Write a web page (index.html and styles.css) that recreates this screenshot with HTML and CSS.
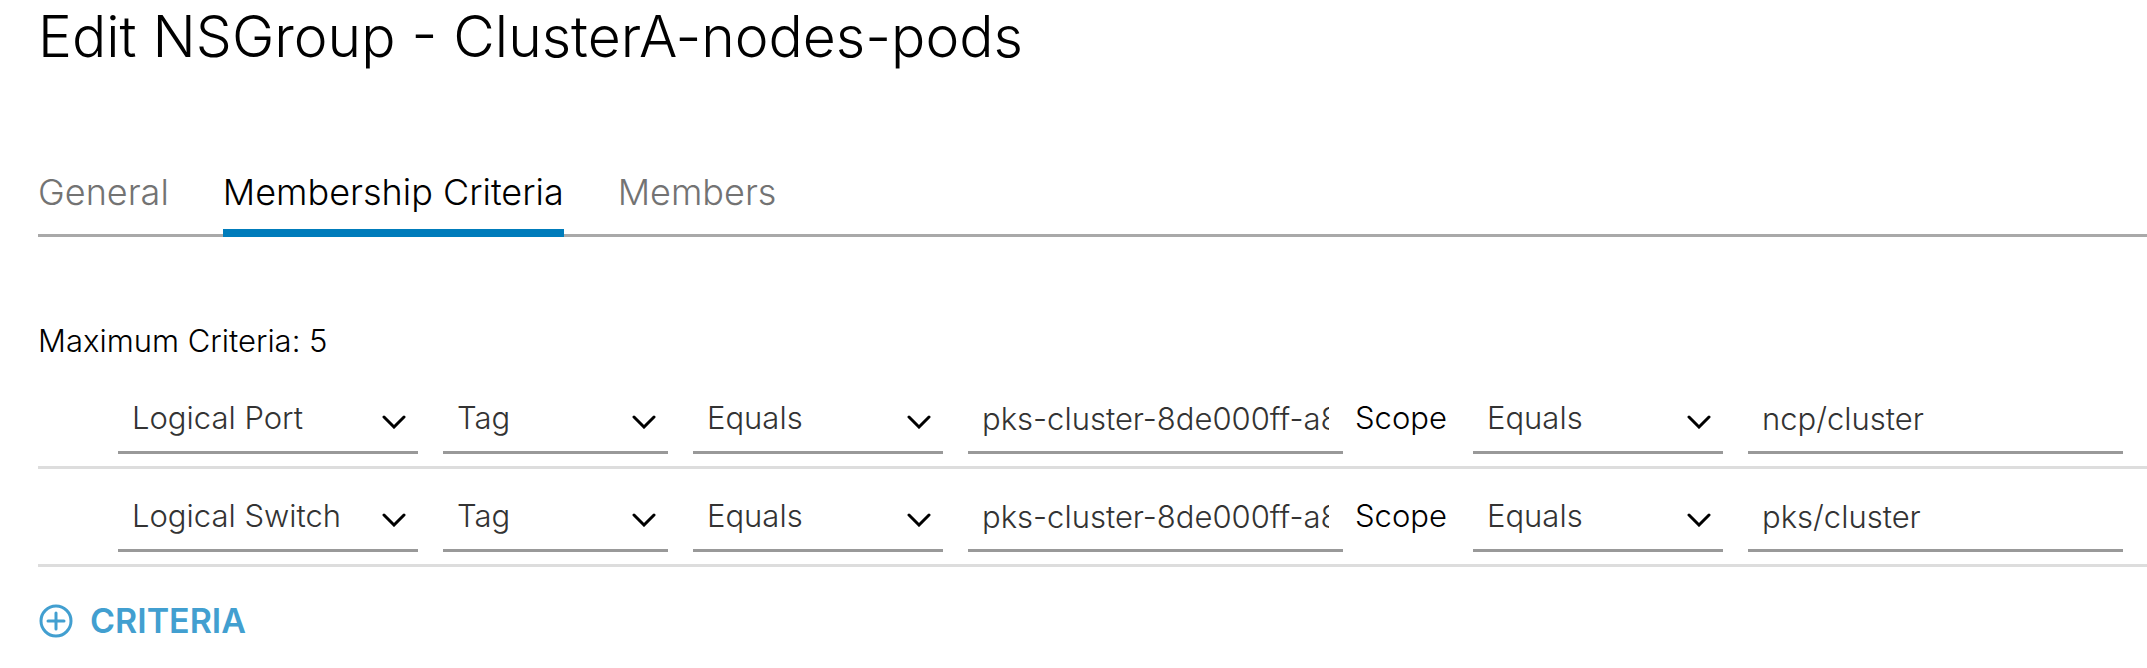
FILE: index.html
```html
<!DOCTYPE html>
<html lang="en">
<head>
<meta charset="utf-8">
<title>Edit NSGroup</title>
<link rel="stylesheet" href="styles.css">
</head>
<body>
<main class="dialog">
  <h1 class="title">Edit NSGroup - ClusterA-nodes-pods</h1>
  <nav class="tabs" role="tablist">
    <button class="tab" type="button" role="tab">General</button>
    <button class="tab active" type="button" role="tab" aria-selected="true">Membership Criteria</button>
    <button class="tab" type="button" role="tab">Members</button>
  </nav>
  <section class="criteria">
    <p class="hint">Maximum Criteria: 5</p>
    <div class="row">
      <div class="field"><select aria-label="Object type"><option>Logical Port</option></select><svg class="chevron" viewBox="0 0 24 14"><path d="M2 2l10 10 10-10"/></svg></div>
      <div class="field"><select aria-label="Attribute"><option>Tag</option></select><svg class="chevron" viewBox="0 0 24 14"><path d="M2 2l10 10 10-10"/></svg></div>
      <div class="field"><select aria-label="Tag operator"><option>Equals</option></select><svg class="chevron" viewBox="0 0 24 14"><path d="M2 2l10 10 10-10"/></svg></div>
      <div class="field wide"><input type="text" aria-label="Tag" value="pks-cluster-8de000ff-a8"></div>
      <label class="scope" for="scope1">Scope</label>
      <div class="field"><select aria-label="Scope operator"><option>Equals</option></select><svg class="chevron" viewBox="0 0 24 14"><path d="M2 2l10 10 10-10"/></svg></div>
      <div class="field wide"><input type="text" id="scope1" value="ncp/cluster"></div>
    </div>
    <div class="row">
      <div class="field"><select aria-label="Object type"><option>Logical Switch</option></select><svg class="chevron" viewBox="0 0 24 14"><path d="M2 2l10 10 10-10"/></svg></div>
      <div class="field"><select aria-label="Attribute"><option>Tag</option></select><svg class="chevron" viewBox="0 0 24 14"><path d="M2 2l10 10 10-10"/></svg></div>
      <div class="field"><select aria-label="Tag operator"><option>Equals</option></select><svg class="chevron" viewBox="0 0 24 14"><path d="M2 2l10 10 10-10"/></svg></div>
      <div class="field wide"><input type="text" aria-label="Tag" value="pks-cluster-8de000ff-a8"></div>
      <label class="scope" for="scope2">Scope</label>
      <div class="field"><select aria-label="Scope operator"><option>Equals</option></select><svg class="chevron" viewBox="0 0 24 14"><path d="M2 2l10 10 10-10"/></svg></div>
      <div class="field wide"><input type="text" id="scope2" value="pks/cluster"></div>
    </div>
    <button class="add" type="button"><svg class="plus" viewBox="0 0 34 34"><circle cx="17" cy="17" r="15"/><path d="M17 9v16M9 17h16"/></svg>CRITERIA</button>
  </section>
</main>
</body>
</html>
```
FILE: styles.css
```css
* { box-sizing: border-box; }
body {
  margin: 0;
  background: #fff;
  color: #000;
  font-family: Inter, "Open Sans", sans-serif;
  font-size: 31px;
  font-weight: 300;
  line-height: 40px;
}
button, select, input { font: inherit; color: inherit; background: none; border: 0; border-radius: 0; padding: 0; margin: 0; }
.dialog { padding-left: 38px; }
.title { margin: 0; font-size: 57px; font-weight: 300; line-height: 74px; }
.tabs { display: flex; gap: 54px; margin-top: 95px; border-bottom: 3px solid #a9a9a9; }
.tab { height: 68px; margin-bottom: -3px; padding-bottom: 14px; border-bottom: 8px solid transparent; font-size: 36px; line-height: 44px; color: #737373; white-space: nowrap; }
.tab.active { color: #000; border-color: #007cbb; }
.criteria { padding-top: 84px; }
.hint { margin: 0 0 10px; }
.row {
  display: grid;
  grid-template-columns: 13fr 10fr 11fr 15fr 130px 11fr 15fr;
  height: 98px;
  padding: 18px 24px 12px 80px;
  align-items: stretch;
  border-bottom: 3px solid #ddd;
}
.field { display: grid; min-width: 0; margin-right: 25px; border-bottom: 3px solid #999; color: #333; }
.field.wide { margin-right: 0; padding: 0 14px; }
.field select, .field input { grid-area: 1 / 1; width: 100%; min-width: 0; height: 58px; outline: 0; }
.field select { appearance: none; padding-left: 14px; }
.chevron { grid-area: 1 / 1; justify-self: end; align-self: center; width: 24px; height: 14px; margin: 4px 12px 0 0; pointer-events: none; fill: none; stroke: #000; stroke-width: 3; stroke-linecap: round; }
.scope { padding-left: 12px; line-height: 58px; }
.add { display: flex; align-items: center; gap: 17px; margin-top: 34px; padding-left: 1px; color: #429fd0; font-size: 34px; font-weight: 600; line-height: 40px; }
.plus { width: 34px; height: 34px; fill: none; stroke: currentColor; stroke-width: 3; stroke-linecap: round; }
```
